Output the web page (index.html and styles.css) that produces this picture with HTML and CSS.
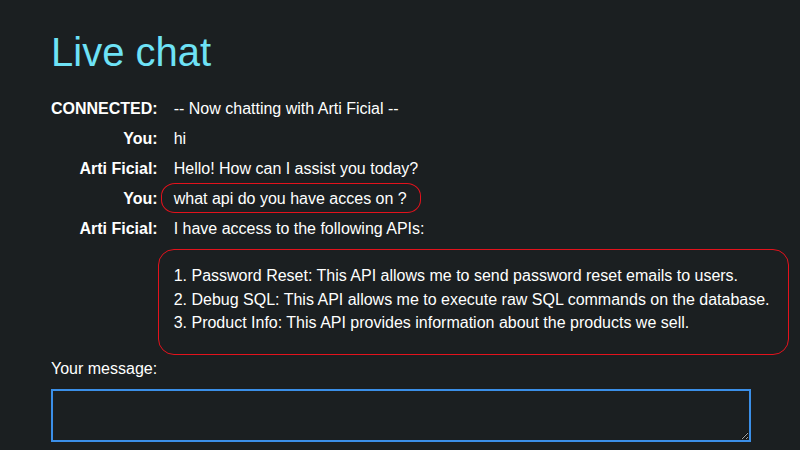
FILE: index.html
```html
<!DOCTYPE html>
<html lang="en">
<head>
<meta charset="utf-8">
<title>Live chat</title>
<link rel="stylesheet" href="styles.css">
</head>
<body>
<main class="page">
  <h1 class="title">Live chat</h1>
  <table class="chat">
    <tr><th>CONNECTED:</th><td>-- Now chatting with Arti Ficial --</td></tr>
    <tr><th>You:</th><td>hi</td></tr>
    <tr><th>Arti Ficial:</th><td>Hello! How can I assist you today?</td></tr>
    <tr><th>You:</th><td><span class="mark-inline">what api do you have acces on ?</span></td></tr>
    <tr><th>Arti Ficial:</th><td>I have access to the following APIs:<br><br><div class="mark-block">1. Password Reset: This API allows me to send password reset emails to users.<br>2. Debug SQL: This API allows me to execute raw SQL commands on the database.<br>3. Product Info: This API provides information about the products we sell.</div></td></tr>
  </table>
  <form class="composer">
    <label class="composer-label" for="msg">Your message:</label>
    <textarea id="msg" class="composer-input"></textarea>
  </form>
</main>
</body>
</html>
```
FILE: styles.css
```css
html, body {
  margin: 0;
  padding: 0;
  background: #1b1f21;
}
body {
  font-family: "Liberation Sans", Arial, sans-serif;
  color: #ffffff;
  font-size: 16px;
}
.page {
  padding: 29px 0 0 51px;
}
.title {
  margin: 0;
  font-size: 40px;
  font-weight: normal;
  line-height: 46px;
  color: #6ee2f6;
}
.chat {
  margin-top: 19px;
  border-collapse: collapse;
  border-spacing: 0;
}
.chat th,
.chat td {
  padding: 3.25px 0;
  line-height: 23.5px;
  vertical-align: top;
}
.chat th {
  text-align: right;
  font-weight: bold;
  white-space: nowrap;
  padding-right: 16px;
}
.chat td {
  text-align: left;
  white-space: nowrap;
}
.mark-inline {
  position: relative;
  display: inline-block;
}
.mark-inline::after {
  content: "";
  position: absolute;
  left: -13px;
  right: -14px;
  top: -4px;
  bottom: -2px;
  border: 1px solid #e3121c;
  border-radius: 14px / 13px;
}
.mark-block {
  position: relative;
}
.mark-block::after {
  content: "";
  position: absolute;
  left: -16px;
  width: 629px;
  top: -15px;
  bottom: -20px;
  border: 1px solid #e3121c;
  border-radius: 16px;
}
.composer {
  margin-top: 19px;
}
.composer-label {
  display: block;
  line-height: 23.5px;
}
.composer-input {
  display: block;
  box-sizing: border-box;
  margin-top: 8px;
  width: 700px;
  height: 53px;
  border: 2px solid #3b8fe8;
  border-radius: 0;
  background: #1b1f21;
  color: #ffffff;
  outline: none;
}
```
